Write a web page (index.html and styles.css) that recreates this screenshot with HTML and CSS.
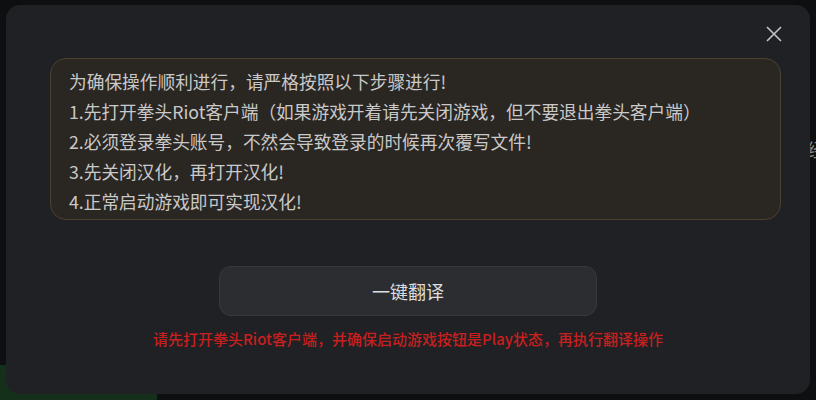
FILE: index.html
```html
<!DOCTYPE html>
<html lang="zh-CN">
<head>
<meta charset="utf-8">
<link rel="stylesheet" href="styles.css">
</head>
<body>
<div class="backdrop">
  <div class="bg-green"></div>
  <div class="bg-glyph">经</div>
  <div class="modal">
    <div class="modal-head">
      <button class="close" aria-label="关闭">
        <svg width="18" height="18" viewBox="0 0 18 18"><path d="M2 2 L16 16 M16 2 L2 16" stroke="#c4c4c4" stroke-width="1.6" fill="none"/></svg>
      </button>
    </div>
    <div class="notice">
      <p>为确保操作顺利进行，请严格按照以下步骤进行!</p>
      <p>1.先打开拳头Riot客户端（如果游戏开着请先关闭游戏，但不要退出拳头客户端）</p>
      <p>2.必须登录拳头账号，不然会导致登录的时候再次覆写文件!</p>
      <p>3.先关闭汉化，再打开汉化!</p>
      <p>4.正常启动游戏即可实现汉化!</p>
    </div>
    <div class="actions">
      <button class="primary">一键翻译</button>
      <p class="warn">请先打开拳头Riot客户端，并确保启动游戏按钮是Play状态，再执行翻译操作</p>
    </div>
  </div>
</div>
</body>
</html>
```
FILE: styles.css
```css
* { box-sizing: border-box; }
html, body { margin: 0; padding: 0; }
body {
  width: 816px;
  height: 400px;
  overflow: hidden;
  background: #0e0f11;
  font-family: "Noto Sans CJK SC", "Noto Sans", sans-serif;
}
.backdrop {
  position: relative;
  width: 816px;
  height: 400px;
  padding: 5px 6px 6px 6px;
}
.bg-green {
  position: absolute;
  left: 0;
  top: 365px;
  width: 157px;
  height: 35px;
  background: #14301a;
}
.bg-glyph {
  position: absolute;
  left: 807px;
  top: 136px;
  font-size: 18px;
  color: #8a8a8a;
}
.modal {
  position: relative;
  height: 389px;
  background: #202124;
  border-radius: 14px;
  padding: 0 29px 0 44px;
  display: flex;
  flex-direction: column;
}
.modal-head {
  height: 53px;
  display: flex;
  justify-content: flex-end;
  align-items: flex-start;
  padding-top: 20px;
  padding-right: 0;
}
.close {
  background: none;
  border: 0;
  padding: 0;
  width: 18px;
  height: 18px;
  margin-right: -2px;
  cursor: pointer;
  display: block;
}
.close svg { display: block; }
.notice {
  height: 162px;
  background: #2a2622;
  border: 1px solid #4d4030;
  border-radius: 16px;
  padding: 7px 18px 5px 18px;
  color: #c9c9c9;
  font-size: 17.7px;
}
.notice p {
  margin: 0;
  line-height: 30px;
  white-space: nowrap;
}
.actions {
  display: flex;
  flex-direction: column;
  align-items: center;
  padding-top: 46px;
}
.primary {
  width: 378px;
  height: 50px;
  margin-right: 15px;
  background: #2c2d31;
  border: 1px solid #38393d;
  border-radius: 12px;
  color: #dedede;
  font-family: "Noto Sans CJK SC", "Noto Sans", sans-serif;
  font-size: 18px;
}
.warn {
  margin: 12px 15px 0 0;
  color: #c81f1f;
  font-size: 15px;
  line-height: 22px;
  font-weight: 500;
  white-space: nowrap;
}
```
